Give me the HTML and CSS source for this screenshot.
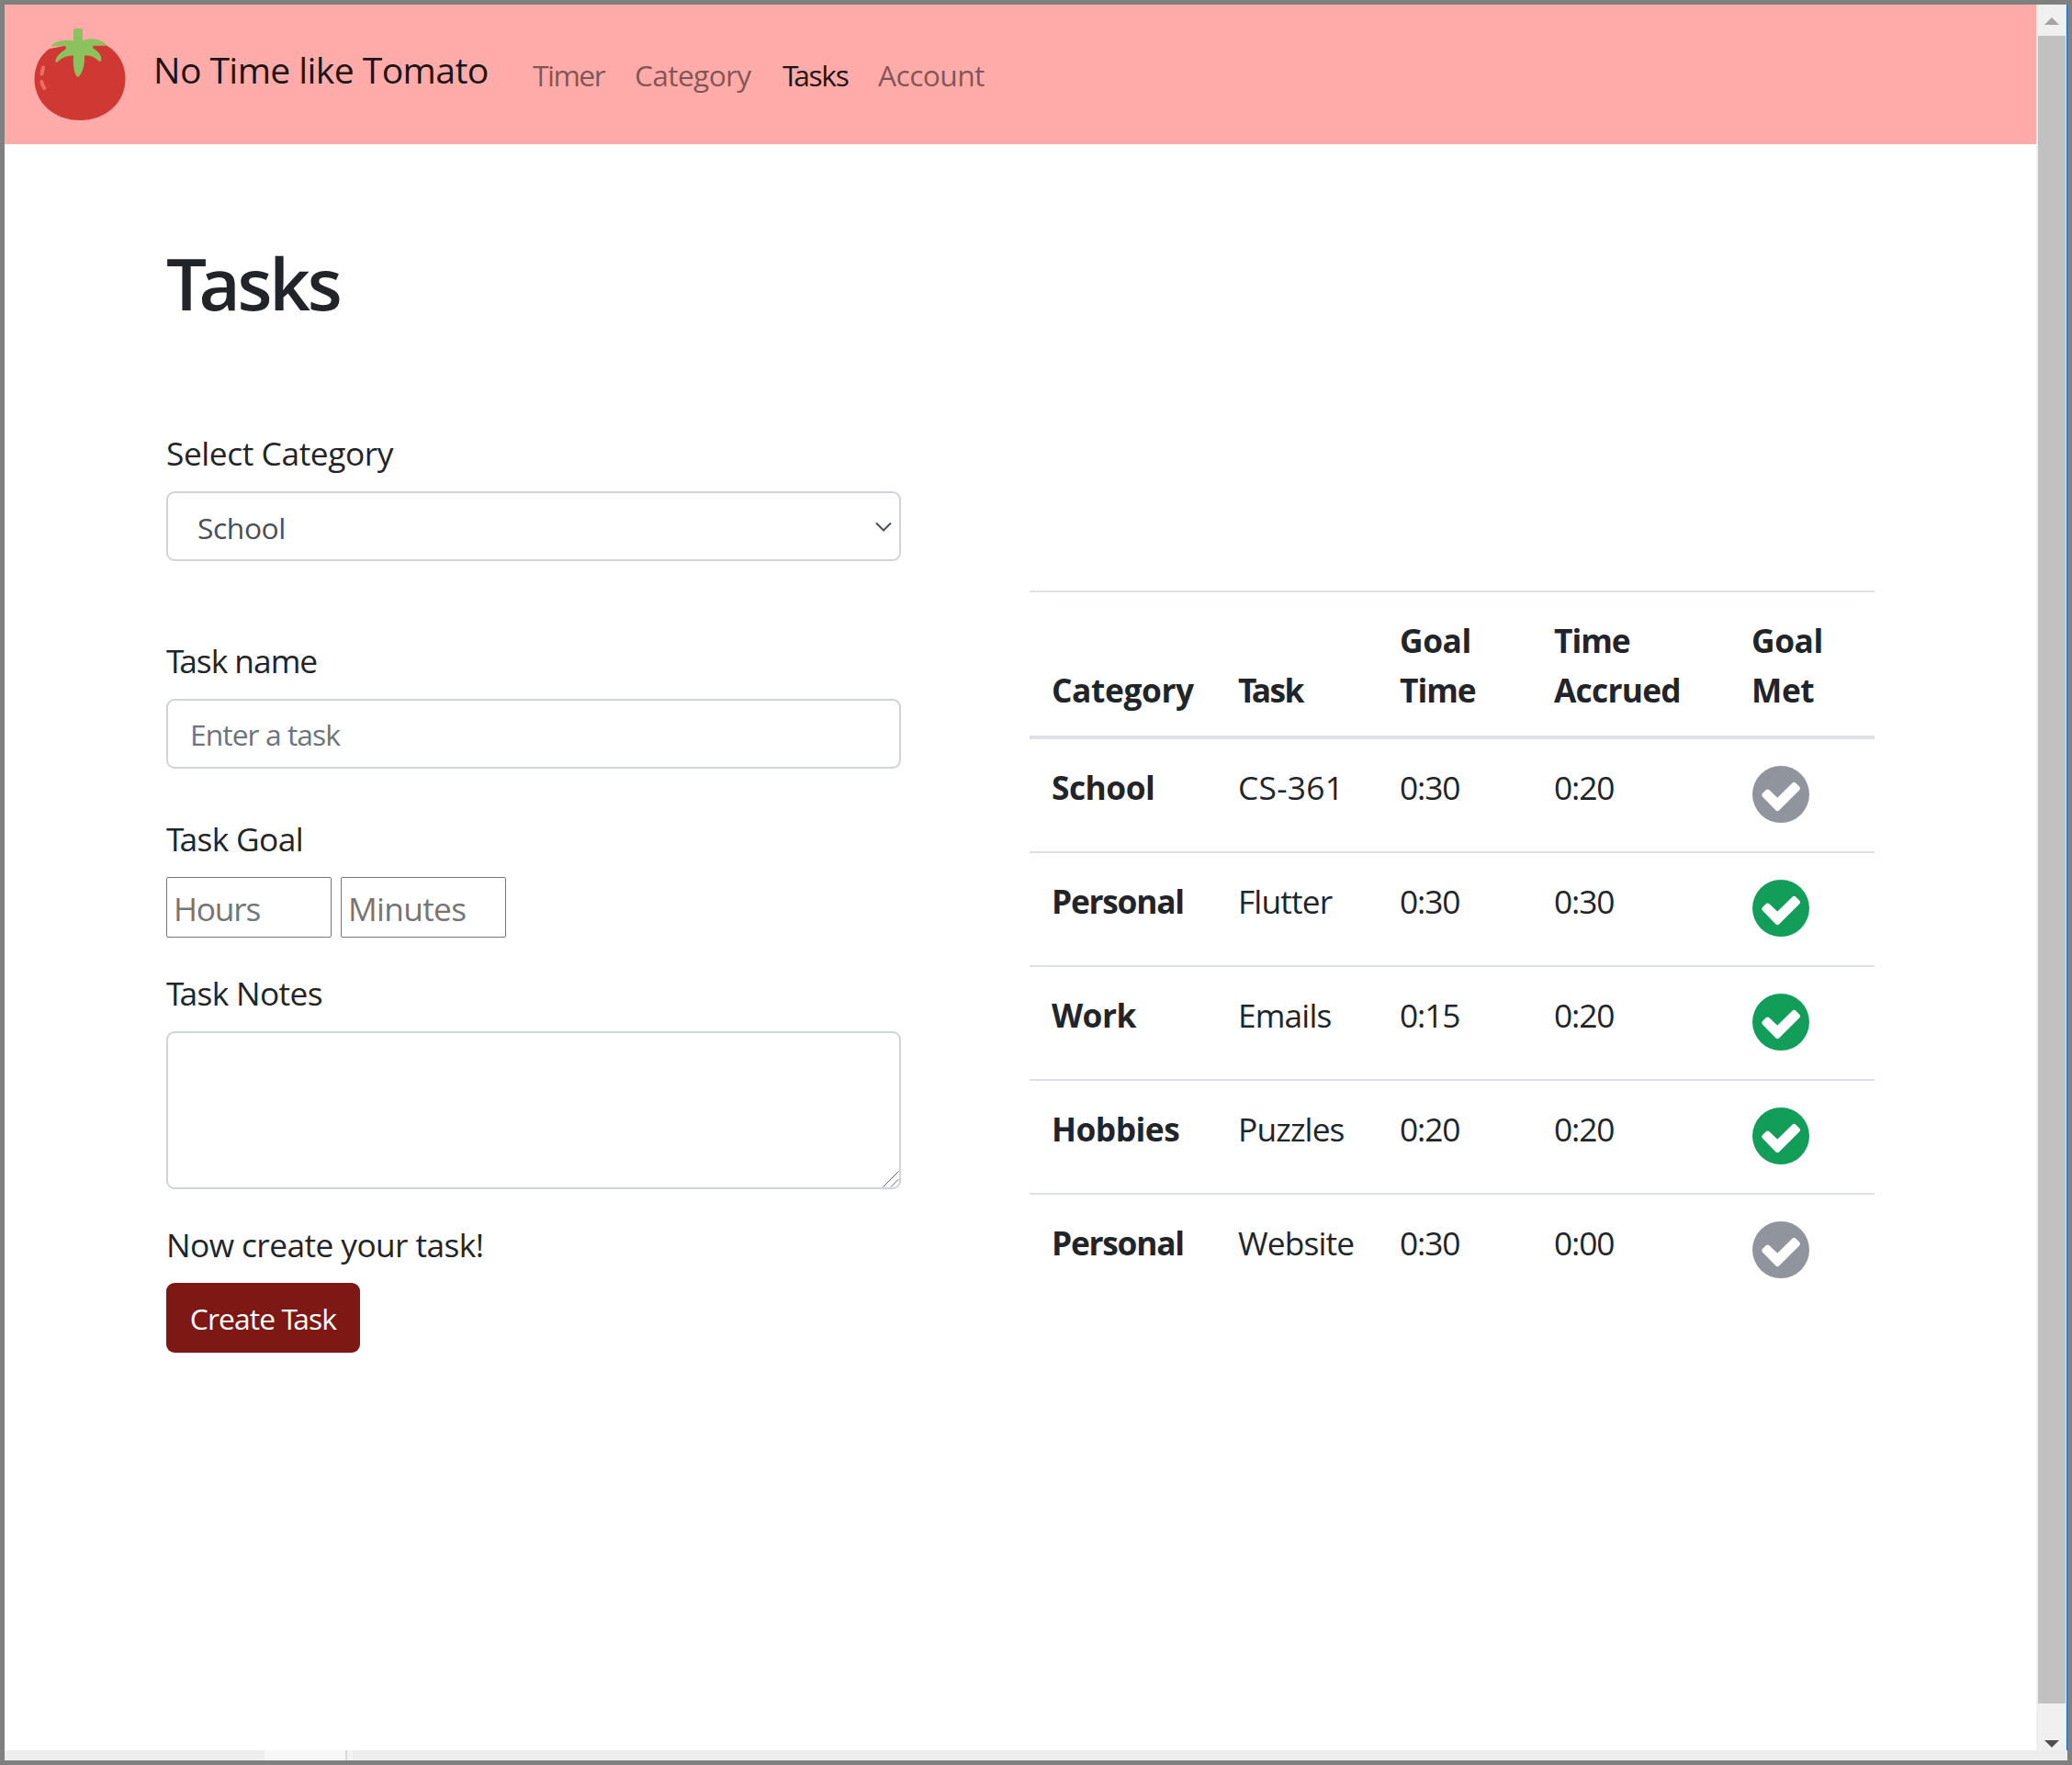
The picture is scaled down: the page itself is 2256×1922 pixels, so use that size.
FILE: index.html
```html
<!DOCTYPE html>
<html lang="en">
<head>
<meta charset="utf-8">
<title>No Time like Tomato</title>
<link rel="stylesheet" href="styles.css">
</head>
<body>
<svg class="defs" width="0" height="0" aria-hidden="true">
  <symbol id="check" viewBox="0 0 62 62">
    <circle cx="31" cy="31" r="31" fill="currentColor"/>
    <path d="M13.2 31.8 16.5 28.4 27.3 38.6 45.4 20.8 49.1 24.5 27.3 46.3Z" fill="#fff" stroke="#fff" stroke-width="5.6" stroke-linejoin="round"/>
  </symbol>
</svg>
<div class="window">
  <div class="viewport">
    <div class="page">
      <header class="navbar">
        <svg class="logo" viewBox="37 31 100 100">
          <path d="M53.6 53.3 72 49.5H116C129 57 136.5 70 136.5 86C136.5 112 115 131 87 131C59 131 37.5 112 37.5 86C37.5 72 44 60 53.6 53.3Z" fill="#d03833"/>
          <path d="M56 49.5C59 45 71 42.500 80 44.3V34Q80 31 83 31H87Q90 31 90 34V43.800C101 40 112 43 116.500 49.500H103C100.500 50 100.500 52.500 103.500 54C108 57 111 61 110.300 66C109.500 67.500 108 67 107 66C103 62 98 60 92 60.500C92.500 70 90 79 86 83Q84.300 84.500 83 82.500C80 77 79.500 69 80 60.500C73 60.500 67 63 62.500 67.500C61 68.500 60 67.500 60.500 65.500C62 60.500 66 57 71 54C72.500 52 72.500 50.500 69.500 50L57 50.800Z" fill="#8bc25d"/>
          <path d="M47.200 73.500Q45.800 77 45.500 80.500M45.300 89Q46 93 48.300 96" fill="none" stroke="#ee6e62" stroke-width="4" stroke-linecap="round"/>
        </svg>
        <a class="brand">No Time like Tomato</a>
        <nav class="links">
          <a class="link timer">Timer</a>
          <a class="link category">Category</a>
          <a class="link tasks active"><span class="cap-t">T</span>asks</a>
          <a class="link account">Account</a>
        </nav>
      </header>
      <main class="content">
        <h1 class="title"><span class="cap-t">T</span>asks</h1>
        <div class="columns">
          <form class="form">
            <div class="group group-category">
              <label>Select Category</label>
              <div class="select-wrap">
                <select class="control select"><option>School</option></select>
                <svg class="chevron" viewBox="0 0 18 12"><path d="M1 1.500 9 9.500 17 1.500" fill="none" stroke="#495057" stroke-width="2"/></svg>
              </div>
            </div>
            <div class="group group-name">
              <label class="label-name"><span class="cap-t">T</span>ask name</label>
              <input class="control name" placeholder="Enter a task">
            </div>
            <div class="group">
              <label class="label-short"><span class="cap-t">T</span>ask Goal</label>
              <div class="goal">
                <input class="number hours" placeholder="Hours">
                <input class="number minutes" placeholder="Minutes">
              </div>
            </div>
            <div class="group">
              <label class="label-short"><span class="cap-t">T</span>ask Notes</label>
              <div class="notes-wrap">
                <textarea class="control notes"></textarea>
                <svg class="grip" viewBox="0 0 18 18"><path d="M.5 17.500 17.500.5M9 17.500 17.500 9" stroke="#666" stroke-width="1"/></svg>
              </div>
            </div>
            <div class="group">
              <label class="label-create">Now create your task!</label>
              <button type="button" class="button">Create <span class="cap-t">T</span>ask</button>
            </div>
          </form>
          <table class="table">
            <colgroup><col class="c1"><col class="c2"><col class="c3"><col class="c4"><col class="c5"></colgroup>
            <thead>
              <tr>
                <th>Category</th>
                <th class="th-task"><span class="cap-t">T</span>ask</th>
                <th>Goal<br><span class="time">Time</span></th>
                <th><span class="time">Time</span><br><span class="accrued">Accrued</span></th>
                <th>Goal<br>Met</th>
              </tr>
            </thead>
            <tbody>
              <tr><th>School</th><td class="wide">CS-361</td><td class="num">0:30</td><td class="num">0:20</td><td><svg class="check"><use href="#check"/></svg></td></tr>
              <tr><th class="tight">Personal</th><td>Flutter</td><td class="num">0:30</td><td class="num">0:30</td><td><svg class="check met"><use href="#check"/></svg></td></tr>
              <tr><th>Work</th><td>Emails</td><td class="num">0:15</td><td class="num">0:20</td><td><svg class="check met"><use href="#check"/></svg></td></tr>
              <tr><th>Hobbies</th><td>Puzzles</td><td class="num">0:20</td><td class="num">0:20</td><td><svg class="check met"><use href="#check"/></svg></td></tr>
              <tr><th class="tight">Personal</th><td>Website</td><td class="num">0:30</td><td class="num">0:00</td><td><svg class="check"><use href="#check"/></svg></td></tr>
            </tbody>
          </table>
        </div>
      </main>
    </div>
    <div class="scrollbar">
      <svg class="arrow up" viewBox="0 0 16 8"><path d="M0 8 8 0 16 8Z" fill="#a3a3a3"/></svg>
      <div class="thumb"></div>
      <svg class="arrow down" viewBox="0 0 16 8"><path d="M0 0 8 8 16 0Z" fill="#505050"/></svg>
    </div>
  </div>
  <div class="strip"><i class="tab"></i><i class="divider"></i><i class="tail"></i></div>
</div>
</body>
</html>
```
FILE: styles.css
```css
* { box-sizing: border-box; }
body {
  margin: 0;
  font-family: "Open Sans", "Noto Sans", sans-serif;
  font-size: 35.3px;
  line-height: 54px;
  color: #212529;
  background: #fff;
}
.defs { position: absolute; }

.window {
  display: flex;
  flex-direction: column;
  height: 1922px;
  border: 5px solid #808080;
}
.viewport {
  display: flex;
  flex: 1;
  border-right: 1px solid #0f6cbd;
}
.page { flex: 1; }

.scrollbar {
  display: flex;
  flex-direction: column;
  align-items: center;
  width: 33px;
  background: #f0f0f0;
}
.arrow { width: 16px; height: 8px; }
.up { margin: 14px 0 12px 1px; }
.thumb { width: 30px; height: 1816px; background: #c1c1c1; }
.down { margin: 40px 0 0 1px; }

.strip { display: flex; height: 11px; padding-left: 283px; background: #ededed; }
.tab { width: 88px; background: #f7f7f7; }
.divider { width: 2px; background: #d9d9d9; }
.tail { width: 6px; background: #f3f3f3; }

.navbar {
  display: flex;
  align-items: center;
  height: 152px;
  padding-left: 32px;
  background: #ffabaa;
}
.logo { width: 100px; height: 100px; }
.brand {
  width: 413px;
  margin-left: 30px;
  padding-bottom: 10px;
  font-size: 39.2px;
  line-height: 60px;
  letter-spacing: -.62px;
  color: rgba(0, 0, 0, .9);
}
.links { display: flex; padding-top: 2px; font-size: 31.8px; color: rgba(0, 0, 0, .5); }
.link { white-space: nowrap; }
.timer { width: 111px; letter-spacing: -1.55px; }
.category { width: 161px; letter-spacing: -.7px; }
.tasks { width: 104px; letter-spacing: -1.4px; }
.account { letter-spacing: -.6px; }
.active { color: rgba(0, 0, 0, .9); }

/* Pulls the following lowercase letter under the bar of the T */
.cap-t { margin-right: -.12em; }

.content { padding: 103px 176px 0; }
.title {
  margin: 0;
  font-size: 78px;
  line-height: 96px;
  font-weight: 570;
  letter-spacing: -3.2px;
}
.title .cap-t { margin-right: -.07em; }
.columns {
  display: flex;
  align-items: flex-start;
  gap: 140px;
  padding-top: 110px;
}

.form { display: flex; flex-direction: column; gap: 33px; width: 800px; }
.group-category { margin-bottom: 48px; }
.group-name { margin-bottom: 16px; }
label { display: block; margin-bottom: 15px; letter-spacing: -.42px; }
.label-name { letter-spacing: -1px; }
.label-short { letter-spacing: -.65px; }
.label-create { letter-spacing: -.58px; }
.control {
  display: block;
  width: 100%;
  height: 76px;
  padding: 2px 24px 0;
  border: 2px solid #ced4da;
  border-radius: 9px;
  background: #fff;
  font-family: inherit;
  font-size: 31.8px;
  color: #495057;
}
.control::placeholder { color: #6c757d; opacity: 1; }
.name { padding-top: 0; letter-spacing: -.95px; }
.select-wrap, .notes-wrap { position: relative; }
.select { appearance: none; padding-left: 32px; letter-spacing: -.42px; }
.chevron { position: absolute; top: 33px; right: 10px; width: 18px; height: 12px; }
.goal { display: flex; gap: 10px; }
.number {
  width: 180px;
  height: 66px;
  padding: 2px 7px 0;
  border: 1px solid #767676;
  border-radius: 2px;
  font-family: inherit;
  font-size: 35.3px;
}
.number::placeholder { color: #757575; }
.hours { letter-spacing: -1.2px; }
.minutes { letter-spacing: -.7px; }
.notes { height: 172px; resize: none; }
.grip { position: absolute; right: 2px; bottom: 2px; width: 18px; height: 18px; }
.button {
  display: block;
  width: 211px;
  height: 76px;
  padding: 0;
  border: 0;
  border-radius: 9px;
  background: #7e1815;
  font-family: inherit;
  font-size: 31.8px;
  letter-spacing: -.9px;
  color: #fff;
}

.table {
  width: 920px;
  margin-top: 177px;
  border-collapse: separate;
  border-spacing: 0;
  table-layout: fixed;
}
.c1 { width: 203px; }
.c2 { width: 176px; }
.c3 { width: 168px; }
.c4 { width: 215px; }
.c5 { width: 158px; }
.table th, .table td {
  padding: 0 0 0 24px;
  border-top: 2px solid #dee2e6;
  text-align: left;
  vertical-align: top;
  letter-spacing: -.85px;
}
.table th { letter-spacing: -.5px; }
.table thead th {
  height: 162px;
  padding-bottom: 23px;
  border-bottom: 4px solid #dee2e6;
  vertical-align: bottom;
  letter-spacing: -.4px;
}
.table tbody th, .table tbody td { height: 124px; padding-top: 25px; }
.table tbody tr:first-child > * { height: 122px; border-top: 0; }
.table thead .th-task { letter-spacing: -1.5px; }
.time { letter-spacing: -1px; }
.accrued { letter-spacing: -.75px; }
.table .tight { letter-spacing: -1.25px; }
.table .num { letter-spacing: -1.1px; }
.table .wide { letter-spacing: .3px; }
.check { display: block; width: 62px; height: 62px; margin: 4px 0 0 1px; color: #90949c; }
.met { color: #129e59; }
```
